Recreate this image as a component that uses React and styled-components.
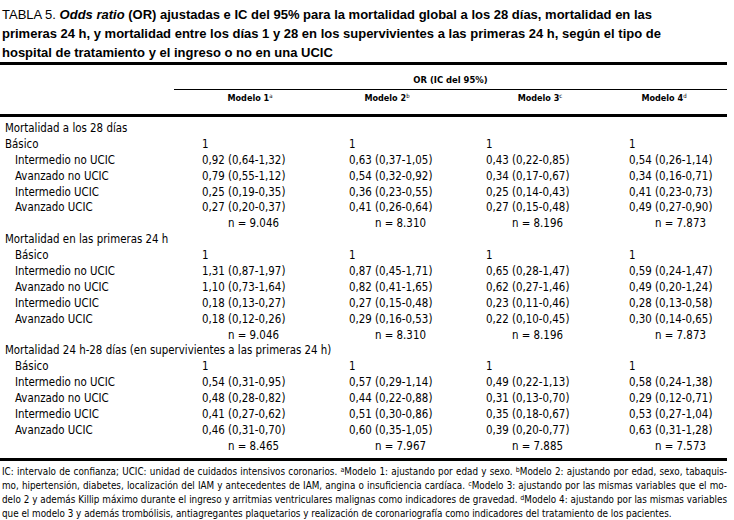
import React from 'react';
import styled, {createGlobalStyle} from 'styled-components';

const GlobalStyle = createGlobalStyle`
    html, body {
        margin: 0;
        padding: 0;
        background: #fff;
        color: #000;
    }
`

const narrow = `"Liberation Sans Narrow", "Arial Narrow", "DejaVu Sans Condensed", sans-serif`

const Page = styled.div`
    width: 727px;
    padding-top: 5px;
    font-family: ${narrow};
`

const Caption = styled.div`
    font-family: "Liberation Sans", Arial, sans-serif;
    font-size: 13px;
    line-height: 19px;
    font-weight: bold;
    padding-left: 2px;

    & .label {
        font-weight: normal;
    }
`

const Rule = styled.div`
    height: ${props => props.thick ? '3px' : '1px'};
    background: #000;
    margin-left: ${props => props.indent || 0}px;
`

const SpanHead = styled.div`
    margin-left: 174px;
    height: 24px;
    line-height: 29px;
    text-align: center;
    font-size: 9.4px;
    font-weight: bold;
`

const ModelHead = styled.div`
    margin-left: 174px;
    display: grid;
    grid-template-columns: 152px 122px 184px 64px;
    height: 24px;
    line-height: 16px;
    font-size: 9px;
    font-weight: bold;
    text-align: center;
`

const Sup = styled.sup`
    font-size: ${props => props.size || 6}px;
    vertical-align: ${props => props.raise || 3}px;
    line-height: 0;
    font-weight: normal;
`

const Body = styled.div`
    padding: 4px 0 3px;
`

const Row = styled.div`
    display: grid;
    grid-template-columns: 202px 147px 137px 143px 1fr;
    height: 15.9px;
    line-height: 15.9px;
    font-size: 11.4px;
    white-space: nowrap;
`

const Label = styled.div`
    padding-left: ${props => props.indent ? 15 : 5}px;
`

const Cell = styled.div`
    padding-left: ${props => props.count ? 26 : 0}px;
`

const Notes = styled.div`
    padding: 4px 0 0 2px;
    font-size: 9.8px;
    line-height: 14px;
`

const NoteLine = styled.div`
    white-space: nowrap;
    text-align: justify;
    text-align-last: ${props => props.last ? 'left' : 'justify'};
`

const sections = [
    {
        title: 'Mortalidad a los 28 días',
        basicIndent: false,
        rows: [
            ['Intermedio no UCIC', '0,92 (0,64-1,32)', '0,63 (0,37-1,05)', '0,43 (0,22-0,85)', '0,54 (0,26-1,14)'],
            ['Avanzado no UCIC', '0,79 (0,55-1,12)', '0,54 (0,32-0,92)', '0,34 (0,17-0,67)', '0,34 (0,16-0,71)'],
            ['Intermedio UCIC', '0,25 (0,19-0,35)', '0,36 (0,23-0,55)', '0,25 (0,14-0,43)', '0,41 (0,23-0,73)'],
            ['Avanzado UCIC', '0,27 (0,20-0,37)', '0,41 (0,26-0,64)', '0,27 (0,15-0,48)', '0,49 (0,27-0,90)'],
        ],
        n: ['9.046', '8.310', '8.196', '7.873'],
    },
    {
        title: 'Mortalidad en las primeras 24 h',
        basicIndent: true,
        rows: [
            ['Intermedio no UCIC', '1,31 (0,87-1,97)', '0,87 (0,45-1,71)', '0,65 (0,28-1,47)', '0,59 (0,24-1,47)'],
            ['Avanzado no UCIC', '1,10 (0,73-1,64)', '0,82 (0,41-1,65)', '0,62 (0,27-1,46)', '0,49 (0,20-1,24)'],
            ['Intermedio UCIC', '0,18 (0,13-0,27)', '0,27 (0,15-0,48)', '0,23 (0,11-0,46)', '0,28 (0,13-0,58)'],
            ['Avanzado UCIC', '0,18 (0,12-0,26)', '0,29 (0,16-0,53)', '0,22 (0,10-0,45)', '0,30 (0,14-0,65)'],
        ],
        n: ['9.046', '8.310', '8.196', '7.873'],
    },
    {
        title: 'Mortalidad 24 h-28 días (en supervivientes a las primeras 24 h)',
        basicIndent: true,
        rows: [
            ['Intermedio no UCIC', '0,54 (0,31-0,95)', '0,57 (0,29-1,14)', '0,49 (0,22-1,13)', '0,58 (0,24-1,38)'],
            ['Avanzado no UCIC', '0,48 (0,28-0,82)', '0,44 (0,22-0,88)', '0,31 (0,13-0,70)', '0,29 (0,12-0,71)'],
            ['Intermedio UCIC', '0,41 (0,27-0,62)', '0,51 (0,30-0,86)', '0,35 (0,18-0,67)', '0,53 (0,27-1,04)'],
            ['Avanzado UCIC', '0,46 (0,31-0,70)', '0,60 (0,35-1,05)', '0,39 (0,20-0,77)', '0,63 (0,31-1,28)'],
        ],
        n: ['8.465', '7.967', '7.885', '7.573'],
    },
]

const Section = ({section}) => (<>
    <Row><Label>{section.title}</Label></Row>
    <Row>
        <Label indent={section.basicIndent}>Básico</Label>
        <Cell>1</Cell><Cell>1</Cell><Cell>1</Cell><Cell>1</Cell>
    </Row>
    {section.rows.map(row => (
        <Row key={row[0]}>
            <Label indent>{row[0]}</Label>
            {row.slice(1).map((v, i) => <Cell key={i}>{v}</Cell>)}
        </Row>
    ))}
    <Row>
        <Label/>
        {section.n.map(v => <Cell key={v} count>n = {v}</Cell>)}
    </Row>
</>)

export default function App() {
    return (<>
        <GlobalStyle/>
        <Page>
            <Caption>
                <span className="label">TABLA 5.</span> <i>Odds ratio</i> (OR) ajustadas e IC del 95% para la mortalidad global a los 28 días, mortalidad en las<br/>
                primeras 24 h, y mortalidad entre los días 1 y 28 en los supervivientes a las primeras 24 h, según el tipo de<br/>
                hospital de tratamiento y el ingreso o no en una UCIC
            </Caption>
            <Rule thick/>
            <SpanHead>OR (IC del 95%)</SpanHead>
            <Rule indent={174}/>
            <ModelHead>
                <div>Modelo 1<Sup>a</Sup></div>
                <div>Modelo 2<Sup>b</Sup></div>
                <div>Modelo 3<Sup>c</Sup></div>
                <div>Modelo 4<Sup>d</Sup></div>
            </ModelHead>
            <Rule thick/>
            <Body>
                {sections.map(s => <Section key={s.title} section={s}/>)}
            </Body>
            <Rule thick/>
            <Notes>
                <NoteLine>IC: intervalo de confianza; UCIC: unidad de cuidados intensivos coronarios. <Sup size={7}>a</Sup>Modelo 1: ajustando por edad y sexo. <Sup size={7}>b</Sup>Modelo 2: ajustando por edad, sexo, tabaquis-</NoteLine>
                <NoteLine>mo, hipertensión, diabetes, localización del IAM y antecedentes de IAM, angina o insuficiencia cardíaca. <Sup size={7}>c</Sup>Modelo 3: ajustando por las mismas variables que el mo-</NoteLine>
                <NoteLine>delo 2 y además Killip máximo durante el ingreso y arritmias ventriculares malignas como indicadores de gravedad. <Sup size={7}>d</Sup>Modelo 4: ajustando por las mismas variables</NoteLine>
                <NoteLine last>que el modelo 3 y además trombólisis, antiagregantes plaquetarios y realización de coronariografía como indicadores del tratamiento de los pacientes.</NoteLine>
            </Notes>
        </Page>
    </>);
}
